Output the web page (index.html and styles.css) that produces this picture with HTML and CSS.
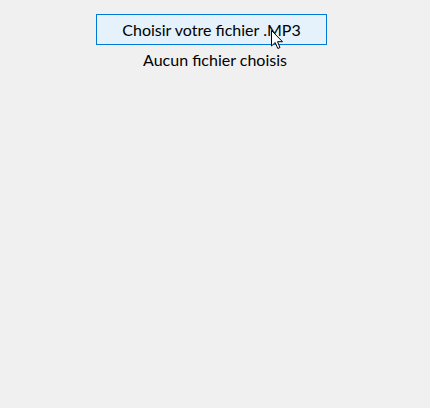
FILE: index.html
```html
<!DOCTYPE html>
<html lang="fr">
<head>
<meta charset="utf-8">
<link rel="stylesheet" href="styles.css">
</head>
<body>
<div class="uploader">
  <label class="file-btn">Choisir votre fichier .MP3
    <svg class="cursor" width="14" height="20" viewBox="0 0 14 20"><path d="M0.5 0.5 L0.5 16 L4.2 12.5 L6.8 18.5 L9 17.5 L6.5 11.7 L11.5 11.7 Z" fill="#fff" stroke="#000" stroke-width="1"/></svg>
  </label>
  <div class="file-name">Aucun fichier choisis</div>
</div>
</body>
</html>
```
FILE: styles.css
```css
html, body {
  margin: 0;
  padding: 0;
  background: #f0f0f0;
  font-family: Lato, "Open Sans", sans-serif;
  color: #000;
}
.uploader {
  display: flex;
  flex-direction: column;
  align-items: center;
  padding-top: 14px;
}
.file-btn {
  position: relative;
  box-sizing: border-box;
  width: 231px;
  height: 31px;
  margin-left: -7px;
  border: 1px solid #0078d7;
  background: #e5f1fb;
  font-size: 16px;
  display: flex;
  align-items: center;
  justify-content: center;
}
.cursor {
  position: absolute;
  left: 174px;
  top: 15px;
}
.file-name {
  margin-top: 5px;
  font-size: 16px;
}
```
